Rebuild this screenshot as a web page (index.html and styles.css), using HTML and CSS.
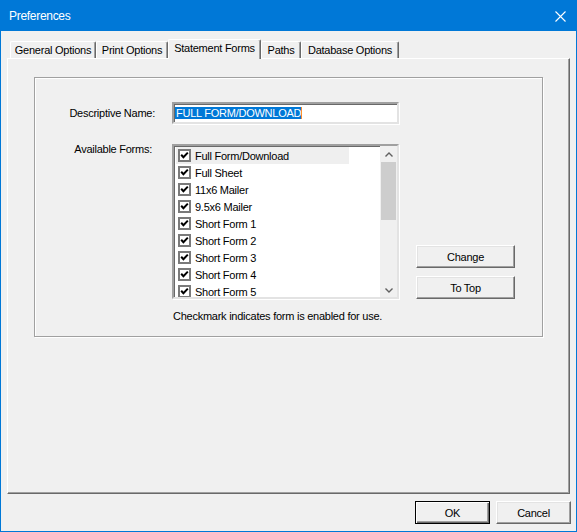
FILE: index.html
```html
<!DOCTYPE html>
<html>
<head>
<meta charset="utf-8">
<title>Preferences</title>
<link rel="stylesheet" href="styles.css">
</head>
<body>
<div class="window">
  <div class="titlebar">
    <span class="title">Preferences</span>
    <svg class="close" width="11" height="11" viewBox="0 0 11 11"><path d="M0.5 0.5 L10.5 10.5 M10.5 0.5 L0.5 10.5" stroke="#fff" stroke-width="1.1" fill="none"/></svg>
  </div>
  <div class="tabs">
    <div class="tab t-general">General Options</div>
    <div class="tab t-print">Print Options</div>
    <div class="tab tab-active t-statement">Statement Forms</div>
    <div class="tab t-paths">Paths</div>
    <div class="tab t-db">Database Options</div>
  </div>
  <div class="panel">
    <div class="group">
      <div class="label label-name">Descriptive Name:</div>
      <div class="textbox"><span class="sel">FULL FORM/DOWNLOAD</span></div>
      <div></div>

      <div class="label label-forms">Available Forms:</div>
      <div class="listbox">
        <div class="items">
          <div class="item hot"><span class="cb"><svg width="9" height="9" viewBox="0 0 9 9"><path d="M1.2 3.8 L3.4 6.2 L7.8 1.6" stroke="#000" stroke-width="2" fill="none"/></svg></span><span>Full Form/Download</span></div>
          <div class="item"><span class="cb"><svg width="9" height="9" viewBox="0 0 9 9"><path d="M1.2 3.8 L3.4 6.2 L7.8 1.6" stroke="#000" stroke-width="2" fill="none"/></svg></span><span>Full Sheet</span></div>
          <div class="item"><span class="cb"><svg width="9" height="9" viewBox="0 0 9 9"><path d="M1.2 3.8 L3.4 6.2 L7.8 1.6" stroke="#000" stroke-width="2" fill="none"/></svg></span><span>11x6 Mailer</span></div>
          <div class="item"><span class="cb"><svg width="9" height="9" viewBox="0 0 9 9"><path d="M1.2 3.8 L3.4 6.2 L7.8 1.6" stroke="#000" stroke-width="2" fill="none"/></svg></span><span>9.5x6 Mailer</span></div>
          <div class="item"><span class="cb"><svg width="9" height="9" viewBox="0 0 9 9"><path d="M1.2 3.8 L3.4 6.2 L7.8 1.6" stroke="#000" stroke-width="2" fill="none"/></svg></span><span>Short Form 1</span></div>
          <div class="item"><span class="cb"><svg width="9" height="9" viewBox="0 0 9 9"><path d="M1.2 3.8 L3.4 6.2 L7.8 1.6" stroke="#000" stroke-width="2" fill="none"/></svg></span><span>Short Form 2</span></div>
          <div class="item"><span class="cb"><svg width="9" height="9" viewBox="0 0 9 9"><path d="M1.2 3.8 L3.4 6.2 L7.8 1.6" stroke="#000" stroke-width="2" fill="none"/></svg></span><span>Short Form 3</span></div>
          <div class="item"><span class="cb"><svg width="9" height="9" viewBox="0 0 9 9"><path d="M1.2 3.8 L3.4 6.2 L7.8 1.6" stroke="#000" stroke-width="2" fill="none"/></svg></span><span>Short Form 4</span></div>
          <div class="item"><span class="cb"><svg width="9" height="9" viewBox="0 0 9 9"><path d="M1.2 3.8 L3.4 6.2 L7.8 1.6" stroke="#000" stroke-width="2" fill="none"/></svg></span><span>Short Form 5</span></div>
        </div>
        <div class="scrollbar">
          <div class="sb-btn"><svg width="8" height="5" viewBox="0 0 8 5"><path d="M0.5 4.5 L4 1 L7.5 4.5" stroke="#606060" stroke-width="1.4" fill="none"/></svg></div>
          <div class="thumb"></div>
          <div class="track"></div>
          <div class="sb-btn sb-down"><svg width="8" height="5" viewBox="0 0 8 5"><path d="M0.5 0.5 L4 4 L7.5 0.5" stroke="#606060" stroke-width="1.4" fill="none"/></svg></div>
        </div>
      </div>
      <div class="side">
        <button class="btn btn-wide">Change</button>
        <button class="btn btn-wide">To Top</button>
      </div>

      <div></div>
      <div class="note">Checkmark indicates form is enabled for use.</div>
      <div></div>
    </div>
  </div>
  <div class="footer">
    <button class="btn btn-default">OK</button>
    <button class="btn">Cancel</button>
  </div>
</div>
</body>
</html>
```

FILE: styles.css
```css
html, body {
  margin: 0;
  padding: 0;
  background: #f0f0f0;
}

.window {
  width: 577px;
  height: 532px;
  box-sizing: border-box;
  border: 1px solid #0078d7;
  background: #f0f0f0;
  display: flex;
  flex-direction: column;
  font-family: "Liberation Sans", Arial, sans-serif;
  font-size: 11px;
  letter-spacing: -0.25px;
  color: #000;
}

.titlebar {
  height: 30px;
  flex: none;
  background: #0078d7;
  display: flex;
  align-items: center;
  justify-content: space-between;
  padding: 0 10px 0 8px;
}

.title {
  color: #fff;
  font-size: 12px;
  letter-spacing: -0.3px;
}

.close {
  display: block;
  margin-top: 1px;
}

/* Tabs */
.tabs {
  display: flex;
  align-items: flex-start;
  padding-top: 8px;
  margin-left: 9px;
  height: 19px;
  flex: none;
}

.tab {
  box-sizing: border-box;
  height: 17px;
  margin-top: 2px;
  border-top: 1px solid #fff;
  border-left: 1px solid #fff;
  border-right: 1px solid #696969;
  box-shadow: inset -1px 0 0 #a0a0a0;
  border-radius: 2px 2px 0 0;
  display: flex;
  align-items: center;
  justify-content: center;
  white-space: nowrap;
  background: #f0f0f0;
}

.tab-active {
  height: 20px;
  margin-top: 0;
  margin-bottom: -1px;
  padding-bottom: 3px;
  position: relative;
  z-index: 1;
}

.t-general { width: 86px; }
.t-print { width: 72px; }
.t-statement { width: 93px; }
.t-paths { width: 40px; }
.t-db { width: 98px; }

/* Panel */
.panel {
  flex: none;
  margin-left: 6px;
  width: 563px;
  height: 436px;
  box-sizing: border-box;
  border: 1px solid;
  border-color: #fff #696969 #696969 #fff;
  box-shadow: inset -1px -1px 0 #a0a0a0;
  padding: 18px 0 0 26px;
}

.group {
  width: 509px;
  height: 260px;
  box-sizing: border-box;
  border: 1px solid #a0a0a0;
  box-shadow: 1px 1px 0 #fff, inset 1px 1px 0 #fff;
  padding: 24px 0 0 1px;
  display: grid;
  grid-template-columns: 119px 227px 99px;
  column-gap: 17px;
  align-items: start;
  align-content: start;
}

.label {
  text-align: right;
  line-height: 13px;
  white-space: nowrap;
}

.label-name {
  align-self: center;
}

.label-forms {
  margin-top: 19px;
  padding-right: 3px;
}

.textbox {
  height: 22px;
  box-sizing: border-box;
  border: 2px solid;
  border-color: #a0a0a0 #e3e3e3 #e3e3e3 #a0a0a0;
  box-shadow: inset 1px 1px 0 #696969, 1px 1px 0 #fff;
  background: #fff;
  display: flex;
  align-items: center;
  padding-left: 1px;
}

.sel {
  background: #0078d7;
  color: #fff;
  line-height: 12px;
  padding: 0 0 0 1px;
  border-right: 1px solid #ff8a2a;
  white-space: nowrap;
}

/* Listbox */
.listbox {
  margin-top: 20px;
  height: 155px;
  box-sizing: border-box;
  border: 2px solid;
  border-color: #a0a0a0 #e3e3e3 #e3e3e3 #a0a0a0;
  box-shadow: inset 1px 1px 0 #696969, 1px 1px 0 #fff;
  background: #fff;
  display: flex;
}

.items {
  flex: 1;
  overflow: hidden;
  padding: 1px 0 0 2px;
}

.item {
  width: 173px;
  height: 17px;
  display: flex;
  align-items: center;
  padding-left: 2px;
  box-sizing: border-box;
  white-space: nowrap;
}

.item.hot {
  background: #efefef;
}

.cb {
  width: 13px;
  height: 13px;
  box-sizing: border-box;
  border: 2px solid #7a7a7a;
  background: #fff;
  display: flex;
  align-items: center;
  justify-content: center;
  margin-right: 4px;
  flex: none;
}

.cb svg {
  display: block;
}

.scrollbar {
  width: 17px;
  flex: none;
  background: #f0f0f0;
  display: flex;
  flex-direction: column;
}

.sb-btn {
  height: 16px;
  display: flex;
  align-items: center;
  justify-content: center;
  flex: none;
}

.sb-btn svg {
  display: block;
}

.sb-down {
  align-items: flex-end;
  height: 14px;
  padding-bottom: 4px;
}

.thumb {
  height: 58px;
  margin: 0 1px 0 1px;
  background: #cdcdcd;
  flex: none;
}

.track {
  flex: 1;
}

.side {
  margin-top: 20px;
  height: 155px;
  display: flex;
  flex-direction: column;
  justify-content: flex-end;
  gap: 8px;
}

.note {
  margin-top: 11px;
  padding-left: 1px;
  line-height: 13px;
  white-space: nowrap;
}

/* Buttons */
.btn {
  font-family: "Liberation Sans", Arial, sans-serif;
  font-size: 11px;
  letter-spacing: -0.25px;
  color: #000;
  width: 75px;
  height: 23px;
  box-sizing: border-box;
  padding: 0;
  margin: 0;
  background: #f0f0f0;
  border: 1px solid;
  border-color: #fff #696969 #696969 #fff;
  box-shadow: inset -1px -1px 0 #a0a0a0, inset 1px 1px 0 #e3e3e3;
  display: flex;
  align-items: center;
  justify-content: center;
}

.btn-wide {
  width: 99px;
}

.btn-default {
  border: 1px solid #000;
  box-shadow: inset 1px 1px 0 #fff, inset -1px -1px 0 #696969, inset -2px -2px 0 #a0a0a0;
}

.footer {
  flex: none;
  margin-top: 7px;
  display: flex;
  justify-content: flex-end;
  gap: 6px;
  padding-right: 5px;
}
```
